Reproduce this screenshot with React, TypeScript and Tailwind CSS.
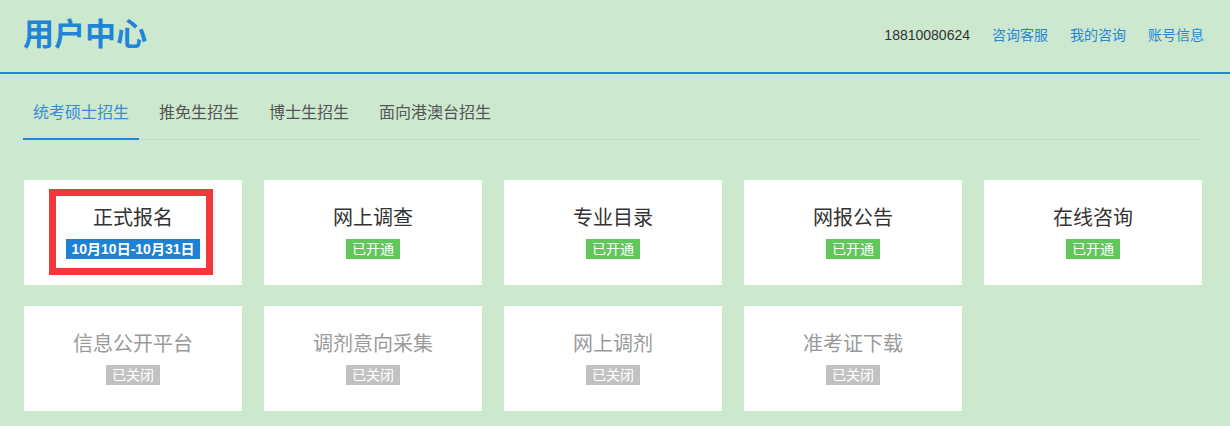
import React from "react";

const font = { fontFamily: '"Liberation Sans", "Noto Sans CJK SC", sans-serif' };

type Card = { title: string; status: "open" | "closed" | "date"; label: string };

const cards: Card[] = [
  { title: "正式报名", status: "date", label: "10月10日-10月31日" },
  { title: "网上调查", status: "open", label: "已开通" },
  { title: "专业目录", status: "open", label: "已开通" },
  { title: "网报公告", status: "open", label: "已开通" },
  { title: "在线咨询", status: "open", label: "已开通" },
  { title: "信息公开平台", status: "closed", label: "已关闭" },
  { title: "调剂意向采集", status: "closed", label: "已关闭" },
  { title: "网上调剂", status: "closed", label: "已关闭" },
  { title: "准考证下载", status: "closed", label: "已关闭" },
];

export default function App() {
  return (
    <div className="w-[1230px] h-[426px] bg-[#cce8cf] overflow-hidden" style={font}>
      <header className="h-[74px] border-b-2 border-[#1f86d6] flex items-center justify-between pl-[23px] pr-[26px] pb-[4px]">
        <h1 className="text-[31px] font-bold text-[#1f85d8] leading-none">用户中心</h1>
        <div className="flex items-center gap-[22px] text-[14px] leading-none pt-[2px]">
          <span className="text-[#333]">18810080624</span>
          <a className="text-[#2a86d3]">咨询客服</a>
          <a className="text-[#2a86d3]">我的咨询</a>
          <a className="text-[#2a86d3]">账号信息</a>
        </div>
      </header>

      <nav className="mt-[27px] ml-[23px] mr-[30px] flex gap-[10px] border-b border-[#c0dcc3] text-[16px]">
        <div className="px-[10px] pb-[13px] leading-[24px] text-[#3a8ad6] border-b-2 border-[#1f86d6] -mb-px">统考硕士招生</div>
        <div className="px-[10px] pb-[13px] leading-[24px] text-[#555]">推免生招生</div>
        <div className="px-[10px] pb-[13px] leading-[24px] text-[#555]">博士生招生</div>
        <div className="px-[10px] pb-[13px] leading-[24px] text-[#555]">面向港澳台招生</div>
      </nav>

      <div className="mt-[40px] ml-[24px] grid grid-cols-[repeat(5,218px)] gap-x-[22px] gap-y-[21px]">
        {cards.map((c) => (
          <div key={c.title} className="relative h-[105px] bg-white flex flex-col items-center pt-[24px]">
            <div className={`text-[20px] leading-[28px] ${c.status === "closed" ? "text-[#9a9a9a]" : "text-[#333]"}`}>
              {c.title}
            </div>
            {c.status === "date" && (
              <div className="mt-[7px] h-[20px] px-[6px] bg-[#1e82d4] text-white text-[14px] font-bold leading-[20px]">
                {c.label}
              </div>
            )}
            {c.status === "open" && (
              <div className="mt-[7px] h-[20px] px-[6px] bg-[#5fc75c] text-white text-[14px] leading-[20px]">
                {c.label}
              </div>
            )}
            {c.status === "closed" && (
              <div className="mt-[7px] h-[20px] px-[6px] bg-[#c2c2c2] text-white text-[14px] leading-[20px]">
                {c.label}
              </div>
            )}
            {c.status === "date" && (
              <div className="absolute left-[25px] top-[9px] w-[164px] h-[86px] border-[7px] border-[#f2383a]" />
            )}
          </div>
        ))}
      </div>
    </div>
  );
}
